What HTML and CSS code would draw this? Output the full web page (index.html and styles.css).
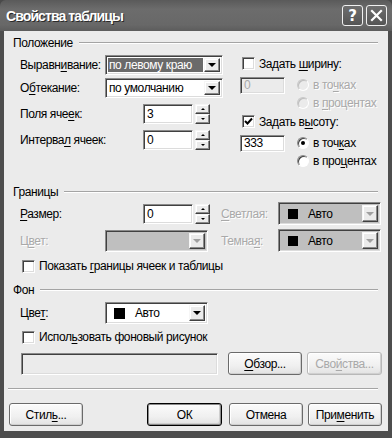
FILE: index.html
```html
<!DOCTYPE html>
<html>
<head>
  <meta charset="utf-8">
  <title>Свойства таблицы</title>
  <link rel="stylesheet" href="styles.css">
</head>
<body>
  <div class="window">
    <div class="titlebar">
      <div class="title">Свойства таблицы</div>
      <div class="caption-buttons">
        <div class="cap-btn">?</div>
        <div class="cap-btn">
          <svg width="13" height="13" viewBox="0 0 13 13"><path d="M2 2 L11 11 M11 2 L2 11" stroke="#fff" stroke-width="2.2" stroke-linecap="square"/></svg>
        </div>
      </div>
    </div>

    <div class="client">
      <div class="group-title">Положение</div>
      <div class="position">
        <div class="pos-left">
          <div class="row row-first">
            <span class="label label-select">Выравн<u>и</u>вание:</span>
            <div class="combo sunken combo-wide">
              <span class="combo-text selected">по левому краю</span>
              <span class="drop raised"></span>
            </div>
          </div>
          <div class="row row-second">
            <span class="label label-select">О<u>б</u>текание:</span>
            <div class="combo sunken combo-wide">
              <span class="combo-text">по умолчанию</span>
              <span class="drop raised"></span>
            </div>
          </div>
          <div class="row row-spin">
            <span class="label label-spin">Поля яче<u>е</u>к:</span>
            <div class="field sunken field-spin">3</div>
            <div class="spin">
              <span class="spin-btn raised up"></span>
              <span class="spin-btn raised down"></span>
            </div>
          </div>
          <div class="row row-spin">
            <span class="label label-spin">Интерва<u>л</u> ячеек:</span>
            <div class="field sunken field-spin">0</div>
            <div class="spin">
              <span class="spin-btn raised up"></span>
              <span class="spin-btn raised down"></span>
            </div>
          </div>
        </div>

        <div class="pos-right">
          <div class="rrow rrow-check">
            <span class="checkbox sunken"></span>
            <span>Задать <u>ш</u>ирину:</span>
          </div>
          <div class="rrow rrow-input">
            <div class="field sunken field-size disabled">0</div>
            <span class="radio disabled"></span>
            <span class="muted">в то<u>ч</u>ках</span>
          </div>
          <div class="rrow rrow-radio">
            <span class="radio disabled"></span>
            <span class="muted">в <u>п</u>роцентах</span>
          </div>
          <div class="rrow rrow-check rrow-gap">
            <span class="checkbox sunken checked">
              <svg width="9" height="9" viewBox="0 0 9 9"><path d="M1 4 L3.5 6.5 L8 1.5" fill="none" stroke="#000" stroke-width="2"/></svg>
            </span>
            <span>Задать в<u>ы</u>соту:</span>
          </div>
          <div class="rrow rrow-input">
            <div class="field sunken field-size">333</div>
            <span class="radio on"></span>
            <span>в точ<u>к</u>ах</span>
          </div>
          <div class="rrow rrow-radio">
            <span class="radio"></span>
            <span>в про<u>ц</u>ентах</span>
          </div>
        </div>
      </div>

      <div class="group-title group-borders">Границы</div>
      <div class="borders">
        <div class="brow brow-first">
          <div class="brow-left">
            <span class="label label-spin"><u>Р</u>азмер:</span>
            <div class="field sunken field-spin">0</div>
            <div class="spin">
              <span class="spin-btn raised up"></span>
              <span class="spin-btn raised down"></span>
            </div>
          </div>
          <span class="label label-color muted"><u>С</u>ветлая:</span>
          <div class="combo sunken combo-color grey">
            <span class="swatch"></span>
            <span class="combo-text">Авто</span>
            <span class="drop raised drop-muted"></span>
          </div>
        </div>
        <div class="brow">
          <div class="brow-left">
            <span class="label label-select muted">Ц<u>в</u>ет:</span>
            <div class="combo sunken combo-small grey">
              <span class="combo-text"></span>
              <span class="drop raised drop-muted"></span>
            </div>
          </div>
          <span class="label label-color muted">Темна<u>я</u>:</span>
          <div class="combo sunken combo-color grey">
            <span class="swatch"></span>
            <span class="combo-text">Авто</span>
            <span class="drop raised drop-muted"></span>
          </div>
        </div>
        <div class="check-row check-borders">
          <span class="checkbox sunken"></span>
          <span>Показать <u>г</u>раницы ячеек и таблицы</span>
        </div>
      </div>

      <div class="group-title group-bg">Фон</div>
      <div class="background">
        <div class="brow bg-color">
          <span class="label label-select">Цве<u>т</u>:</span>
          <div class="combo sunken combo-small">
            <span class="swatch swatch-bg"></span>
            <span class="combo-text text-bg">Авто</span>
            <span class="drop raised"></span>
          </div>
        </div>
        <div class="check-row check-picture">
          <span class="checkbox sunken"></span>
          <span>Испол<u>ь</u>зовать фоновый рисунок</span>
        </div>
        <div class="picture-row">
          <div class="field sunken field-picture disabled"></div>
          <button class="btn btn-browse"><u>О</u>бзор...</button>
          <button class="btn btn-props" disabled>Сво<u>й</u>ства...</button>
        </div>
      </div>

      <div class="separator"></div>

      <div class="footer">
        <button class="btn">Стил<u>ь</u>...</button>
        <button class="btn btn-default">ОК</button>
        <button class="btn">Отмена</button>
        <button class="btn">При<u>м</u>енить</button>
      </div>
    </div>
  </div>
</body>
</html>
```

FILE: styles.css
```css
* {
  box-sizing: border-box;
}

body {
  margin: 0;
  font-family: "Liberation Sans", Arial, sans-serif;
  font-size: 12px;
  letter-spacing: -0.4px;
  color: #000;
  background: #4a4a4a;
}

u {
  text-decoration: underline;
  text-underline-offset: 2px;
}

.window {
  width: 392px;
  height: 438px;
  display: flex;
  flex-direction: column;
  padding: 0 4px 7px;
  background: #4d4d4d;
  border-radius: 6px 6px 0 0;
}

/* title bar */

.titlebar {
  height: 31px;
  margin: 0 -4px;
  padding: 0 5px 0 6px;
  display: flex;
  align-items: center;
  justify-content: space-between;
  background: linear-gradient(#5a5a5a 0%, #6c6c6c 30%, #686868 80%, #5c5c5c 100%);
  border-radius: 6px 6px 0 0;
}

.title {
  color: #fff;
  font-size: 14px;
  font-weight: 700;
  letter-spacing: -0.9px;
  text-shadow: 1px 1px 0 #2a2a2a;
}

.caption-buttons {
  display: flex;
  gap: 3px;
}

.cap-btn {
  width: 21px;
  height: 21px;
  display: flex;
  align-items: center;
  justify-content: center;
  border: 1px solid #f0f0f0;
  border-radius: 3px;
  background: linear-gradient(#6e6e6e, #555);
  color: #fff;
  font-family: "DejaVu Sans", sans-serif;
  font-size: 15px;
  font-weight: 700;
}

/* client area */

.client {
  flex: 1;
  padding: 4px 6px 5px 5px;
  background: #ebebeb;
}

.group-title {
  height: 16px;
  margin: 0 4px;
  display: flex;
  align-items: center;
}

.group-title::after {
  content: "";
  flex: 1;
  margin-left: 6px;
  border-top: 1px solid #a4a4a4;
  border-bottom: 1px solid #fff;
}

.group-borders {
  margin-top: 15px;
}

.group-bg {
  margin-top: 8px;
}

.muted {
  color: #a9a9a9;
  text-shadow: 1px 1px 0 #fff;
}

/* 3d borders */

.sunken {
  border: 1px solid;
  border-color: #8a8a8a #fff #fff #8a8a8a;
  box-shadow: inset 1px 1px 0 #404040, inset -1px -1px 0 #dcdcdc;
  background: #fff;
}

.raised {
  border: 1px solid;
  border-color: #f6f6f6 #404040 #404040 #f6f6f6;
  box-shadow: inset -1px -1px 0 #8a8a8a, inset 1px 1px 0 #fff;
  background: #ebebeb;
}

/* position */

.position {
  margin-top: 4px;
  padding-left: 11px;
  display: flex;
}

.pos-left {
  width: 203px;
}

.row {
  height: 20px;
  display: flex;
  align-items: center;
}

.row-second {
  margin-top: 3px;
}

.row-spin {
  margin-top: 6px;
}

.label-select {
  width: 85px;
  flex: none;
}

.label-spin {
  width: 123px;
  flex: none;
}

.combo {
  height: 100%;
  display: flex;
  align-items: stretch;
  padding: 2px;
}

.combo-wide {
  width: 118px;
}

.combo-small {
  width: 103px;
  height: 22px;
}

.combo-text {
  flex: 1;
  display: flex;
  align-items: center;
  padding-left: 1px;
  white-space: nowrap;
}

.combo-text.selected {
  background: #6a6a6a;
  color: #fff;
  margin-right: 1px;
}

.drop {
  width: 16px;
  flex: none;
  display: flex;
  align-items: center;
  justify-content: center;
}

.drop::after {
  content: "";
  border-left: 4px solid transparent;
  border-right: 4px solid transparent;
  border-top: 4px solid #000;
}

.drop-muted::after {
  border-top-color: #a0a0a0;
}

.field {
  height: 100%;
  display: flex;
  align-items: center;
  padding-left: 3px;
}

.field-spin {
  width: 50px;
}

.field.disabled {
  background: #ebebeb;
  color: #a9a9a9;
}

.spin {
  width: 15px;
  height: 20px;
  margin-left: 2px;
  display: flex;
  flex-direction: column;
}

.spin-btn {
  flex: 1;
  display: flex;
  align-items: center;
  justify-content: center;
}

.spin-btn::after {
  content: "";
  border-left: 2px solid transparent;
  border-right: 2px solid transparent;
}

.spin-btn.up::after {
  border-bottom: 2px solid #000;
}

.spin-btn.down::after {
  border-top: 2px solid #000;
}

.pos-right {
  margin-left: 17px;
}

.rrow {
  display: flex;
  align-items: center;
}

.rrow-check {
  height: 17px;
  padding-left: 2px;
}

.rrow-gap {
  margin-top: 2px;
}

.rrow-input {
  height: 18px;
  margin-top: 4px;
}

.rrow-radio {
  height: 17px;
  padding-left: 57px;
}

.field-size {
  width: 45px;
  height: 17px;
  margin-right: 12px;
}

.checkbox {
  width: 13px;
  height: 13px;
  margin-right: 4px;
  flex: none;
  display: flex;
  align-items: center;
  justify-content: center;
}

.radio {
  width: 12px;
  height: 12px;
  margin-right: 4px;
  flex: none;
  border-radius: 50%;
  background: #fff;
  border: 1px solid;
  border-color: #8a8a8a #fff #fff #8a8a8a;
  box-shadow: inset 1px 1px 0 #404040;
  position: relative;
}

.radio.disabled {
  background: #ebebeb;
  border-color: #c8c8c8 #fff #fff #c8c8c8;
  box-shadow: inset 1px 1px 0 #bdbdbd;
}

.radio.on::after {
  content: "";
  position: absolute;
  left: 3px;
  top: 3px;
  width: 4px;
  height: 4px;
  border-radius: 50%;
  background: #000;
}

/* borders */

.borders {
  padding-left: 11px;
}

.brow {
  height: 23px;
  display: flex;
  align-items: center;
}

.brow-first {
  margin-top: 2px;
}

.brow + .brow {
  margin-top: 4px;
}

.brow-left {
  width: 201px;
  height: 100%;
  display: flex;
  align-items: center;
}

.brow-left .field {
  height: 20px;
}

.label-color {
  width: 57px;
  flex: none;
}

.combo-color {
  width: 103px;
  height: 23px;
}

.grey {
  background: #bfbfbf;
}

.swatch {
  width: 10px;
  height: 10px;
  margin: auto 9px auto 7px;
  background: #000;
  flex: none;
}

.combo-color .combo-text {
  flex: 1;
}

.check-row {
  height: 16px;
  display: flex;
  align-items: center;
  padding-left: 2px;
}

.check-borders {
  margin-top: 6px;
}

/* background */

.background {
  padding-left: 11px;
}

.bg-color {
  margin-top: 4px;
  height: 22px;
}

.swatch-bg {
  width: 11px;
  height: 11px;
  margin: auto 9px auto 6px;
}

.text-bg {
  flex: 1;
}

.check-picture {
  margin-top: 5px;
}

.picture-row {
  height: 23px;
  margin-top: 7px;
  display: flex;
  align-items: center;
}

.field-picture {
  width: 197px;
  height: 22px;
  margin-left: 1px;
}

.btn {
  width: 74px;
  height: 23px;
  padding: 0;
  font-family: "Liberation Sans", Arial, sans-serif;
  font-size: 12px;
  letter-spacing: -0.4px;
  color: #000;
  border: 1px solid #6a6a6a;
  border-radius: 3px;
  background: linear-gradient(#fbfbfb, #f0f0f0 60%, #e2e2e2);
  box-shadow: inset -1px -1px 0 #cfcfcf, inset 1px 1px 0 #fff;
}

.btn:disabled {
  color: #a9a9a9;
  border-color: #b8b8b8;
}

.btn-browse {
  margin-left: 10px;
}

.btn-props {
  width: 75px;
  margin-left: 5px;
}

.separator {
  margin: 13px 4px 0 -1px;
  border-top: 1px solid #a4a4a4;
  border-bottom: 1px solid #fff;
}

.footer {
  margin-top: 13px;
  display: flex;
  align-items: center;
}

.footer .btn + .btn {
  margin-left: 5px;
}

.btn-default {
  width: 75px;
  margin-left: auto !important;
  margin-right: 2px;
  border: 1px solid #000;
  box-shadow: inset 0 0 0 1px #8a8a8a, inset -2px -2px 0 #cfcfcf;
}
```
